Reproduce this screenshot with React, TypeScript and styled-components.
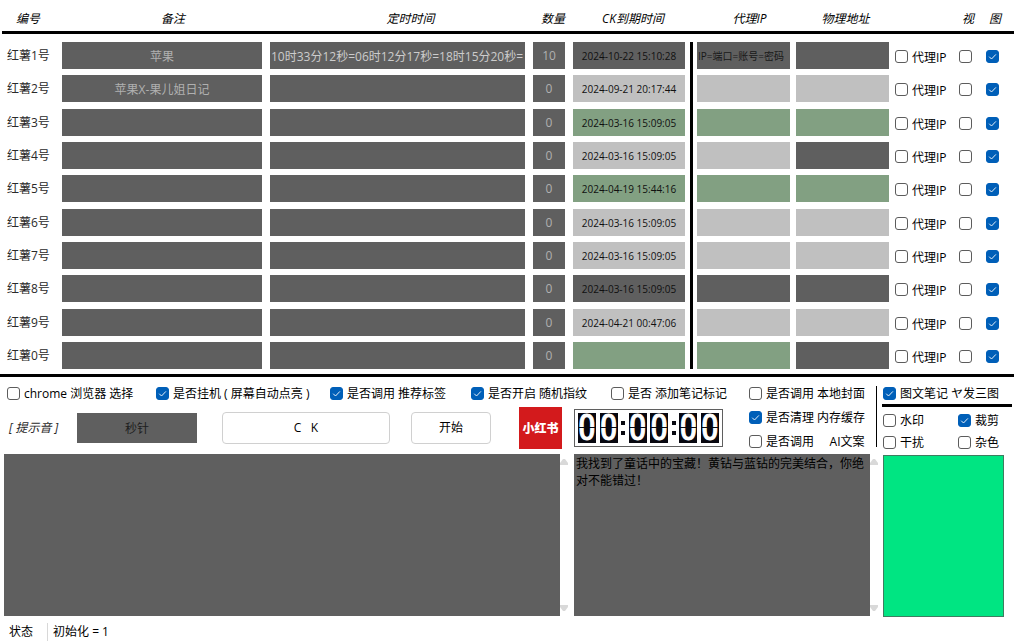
import React from "react";
import styled, { createGlobalStyle } from "styled-components";

const GREY = "#5f5f5f";
const SILVER = "#c0c0c0";
const SAGE = "#82a082";
const BLUE = "#005fb8";

const GlobalStyle = createGlobalStyle`
  *, *::before, *::after { box-sizing: border-box; }
  body {
    margin: 0;
    background: #fff;
    color: #000;
    font: 12px/14px "Open Sans", "Noto Sans CJK SC", sans-serif;
  }
  button, input, textarea { font: inherit; color: inherit; margin: 0; }
`;

const Page = styled.main`
  min-height: 100vh;
  display: flex;
  flex-direction: column;
`;

const AccountTable = styled.table`
  display: block;
  width: 100%;
  border-bottom: 3px solid #000;
`;

const Row = styled.tr`
  display: grid;
  grid-template-columns:
    62px minmax(0, 208fr) minmax(0, 263fr) 40px 120px 103px 99px 64px 27px 28px;
`;

const Head = styled.thead`
  display: block;
  height: 34px;
  margin-left: 2px;
  border-bottom: 3px solid #000;

  ${Row} {
    margin-left: -2px;
    height: 31px;
    padding-top: 12px;
  }
`;

const HeadCell = styled.th<{ $indent?: number; $left?: boolean }>`
  padding: 0 0 0 ${(p) => p.$indent ?? 0}px;
  font-weight: 400;
  font-style: italic;
  white-space: nowrap;
  text-align: ${(p) => (p.$left ? "left" : "center")};
`;

const Body = styled.tbody`
  display: block;
  padding: 8px 0 5px;

  ${Row} { height: 33px; }
  ${Row}:nth-child(3n + 2) { height: 34px; }
  ${Row}:last-child { height: 27px; }
`;

const Cell = styled.td`
  padding: 0 8px 0 0;
`;

const CountCell = styled(Cell)`
  margin-left: -1px;
  padding-left: 1px;
`;

const DateCell = styled(Cell)`
  padding-right: 5px;
  border-right: 3px solid #000;
`;

const ProxyCell = styled(Cell)`
  padding: 0 6px 0 4px;
`;

const AddressCell = styled(Cell)`
  padding-right: 6px;
`;

const CheckCell = styled(Cell)`
  height: 27px;
  padding: 2px 0 0;
  display: flex;
  align-items: center;
`;

const RowName = styled.th`
  height: 27px;
  padding: 0 0 0 7px;
  display: flex;
  align-items: center;
  font-weight: 400;
  color: #2a2a2a;
`;

const Field = styled.input<{
  $bg?: string;
  $ink?: string;
  $small?: boolean;
  $left?: boolean;
}>`
  display: block;
  width: 100%;
  height: 27px;
  padding: 0 ${(p) => (p.$left ? 1 : 0)}px;
  border: 0;
  border-radius: 0;
  outline: 0;
  background: ${(p) => p.$bg ?? GREY};
  color: ${(p) => p.$ink ?? "#b0b0b0"};
  font-size: ${(p) => (p.$small ? 10 : 12)}px;
  text-align: ${(p) => (p.$left ? "left" : "center")};
`;

const Tick = styled.input.attrs({ type: "checkbox" })`
  appearance: none;
  flex: none;
  width: 13px;
  height: 13px;
  border: 1px solid #5c5c5c;
  border-radius: 3px;
  background: #fff;

  &:checked {
    border-color: ${BLUE};
    background: ${BLUE}
      url("data:image/svg+xml,%3Csvg xmlns='http://www.w3.org/2000/svg' viewBox='0 0 13 13'%3E%3Cpath d='M3.2 6.7 5.5 9 9.9 4.4' fill='none' stroke='%23fff' stroke-width='.9'/%3E%3C/svg%3E")
      center / 13px 13px no-repeat;
  }
`;

const TickLabel = styled.label`
  display: flex;
  align-items: center;
  gap: 4px;
  height: 14px;
  white-space: pre;
`;

const TickText = styled.span`
  padding-top: 2px;
`;

const Controls = styled.section`
  display: grid;
  grid-template-columns: minmax(0, 1fr) 127px 131px;
  padding: 9px 7px 5px;
`;

const MainControls = styled.div`
  display: flex;
  flex-direction: column;
  gap: 7px;
`;

const OptionRow = styled.div`
  display: grid;
  grid-template-columns: 149fr 174fr 141fr 140fr 138fr;
`;

const ActionRow = styled.div`
  display: grid;
  grid-template-columns: 70px 145px minmax(0, 1fr) 108px 55px 175px;
  align-items: center;
  height: 42px;
`;

const ToneLabel = styled.label`
  padding-left: 2px;
  font-style: italic;
  color: #2a2a2a;
  white-space: nowrap;
`;

const ToneField = styled(Field)`
  width: 120px;
  height: 30px;
`;

const ActionButton = styled.button<{ $wide?: boolean }>`
  height: 32px;
  ${(p) => (p.$wide ? "margin-right: 21px;" : "width: 80px;")}
  padding: 0;
  border: 1px solid #d0d0d0;
  border-radius: 4px;
  background: #fff;
  white-space: pre;
`;

const Logo = styled.div`
  width: 43px;
  height: 42px;
  display: grid;
  place-items: center;
  background: #d31a1c;
  color: #fff;
  font: 900 12px/14px "Noto Sans CJK SC", sans-serif;
`;

const Clock = styled.div`
  width: 149px;
  height: 38px;
  padding: 0 3px;
  display: flex;
  align-items: center;
  justify-content: space-between;
  border: 1px solid #5f5f5f;
  background: #fff;
`;

const Digit = styled.span`
  position: relative;
  width: 18px;
  height: 30px;
  background: #080810;
  color: #fff;
  font: 400 36px/30px "Liberation Sans Narrow", "Roboto Condensed", sans-serif;
  text-align: center;
  -webkit-text-stroke: 1px #fff;

  &::after {
    content: "";
    position: absolute;
    inset: 14px 0 auto;
    height: 1px;
    background: #080810;
  }
`;

const Colon = styled.span`
  width: 4px;
  height: 14px;
  border: solid #080810;
  border-width: 4px 0;
`;

const SideOptions = styled.div`
  display: flex;
  flex-direction: column;
  gap: 10px;
`;

const ImageOptions = styled.div`
  height: 61px;
  margin-right: -5px;
  padding-left: 5px;
  border-left: 1px solid #000;
`;

const ImageHeader = styled.div`
  padding: 0 0 4px 1px;
  border-bottom: 3px solid #000;
`;

const ImageGrid = styled.div`
  display: grid;
  grid-template-columns: 75px 1fr;
  row-gap: 8px;
  padding: 6px 0 0 1px;
`;

const Editors = styled.section`
  flex: 1;
  min-height: 120px;
  display: grid;
  grid-template-columns: minmax(0, 556fr) 14px minmax(0, 296fr) 13px 121px;
  padding: 0 10px 0 4px;
`;

const TextBox = styled.textarea`
  display: block;
  width: 100%;
  height: 100%;
  padding: 1px 2px;
  border: 0;
  border-radius: 0;
  outline: 0;
  resize: none;
  overflow: hidden;
  background: ${GREY};
  color: #000;
  line-height: 17px;
`;

const ScrollTrack = styled.div`
  display: flex;
  flex-direction: column;
  justify-content: space-between;
  padding: 5px 0;
`;

const Preview = styled.div`
  margin: 1px 0 -1px;
  border: 1px solid #3e7d60;
  background: #00e582;
`;

const StatusBar = styled.footer`
  display: flex;
  align-items: center;
  height: 25px;
  padding-left: 9px;
`;

const StatusText = styled.span`
  padding: 2px 5px;
  margin: 7px 0 0 14px;
  height: 18px;
  border-left: 1px solid #d8d8d8;
`;

const StatusName = styled.span`
  padding-top: 7px;
`;

type Account = {
  id: string;
  note?: string;
  times?: string;
  count: number;
  expires: string;
  tones: [string, string, string];
  proxy?: string;
};

const accounts: Account[] = [
  {
    id: "1",
    note: "苹果",
    times: "10时33分12秒=06时12分17秒=18时15分20秒=",
    count: 10,
    expires: "2024-10-22 15:10:28",
    tones: [GREY, GREY, GREY],
    proxy: "IP=端口=账号=密码",
  },
  { id: "2", note: "苹果X-果儿姐日记", count: 0, expires: "2024-09-21 20:17:44", tones: [SILVER, SILVER, SILVER] },
  { id: "3", count: 0, expires: "2024-03-16 15:09:05", tones: [SAGE, SAGE, SAGE] },
  { id: "4", count: 0, expires: "2024-03-16 15:09:05", tones: [SILVER, SILVER, GREY] },
  { id: "5", count: 0, expires: "2024-04-19 15:44:16", tones: [SAGE, SAGE, SAGE] },
  { id: "6", count: 0, expires: "2024-03-16 15:09:05", tones: [SILVER, SILVER, SILVER] },
  { id: "7", count: 0, expires: "2024-03-16 15:09:05", tones: [SILVER, SILVER, SILVER] },
  { id: "8", count: 0, expires: "2024-03-16 15:09:05", tones: [GREY, GREY, GREY] },
  { id: "9", count: 0, expires: "2024-04-21 00:47:06", tones: [SILVER, SILVER, SILVER] },
  { id: "0", count: 0, expires: "", tones: [SAGE, SAGE, GREY] },
];

function Option({ text, on }: { text: string; on?: boolean }) {
  return (
    <TickLabel>
      <Tick defaultChecked={on} />
      <TickText>{text}</TickText>
    </TickLabel>
  );
}

function AccountRow({ a }: { a: Account }) {
  const name = `红薯${a.id}号`;
  return (
    <Row>
      <RowName scope="row">{name}</RowName>
      <Cell><Field aria-label={`${name} 备注`} defaultValue={a.note} /></Cell>
      <Cell><Field aria-label={`${name} 定时时间`} $left $ink="#cccccc" defaultValue={a.times} /></Cell>
      <CountCell><Field aria-label={`${name} 数量`} defaultValue={a.count} /></CountCell>
      <DateCell>
        <Field aria-label={`${name} CK到期时间`} $small $ink="#101010" $bg={a.tones[0]} defaultValue={a.expires} />
      </DateCell>
      <ProxyCell>
        <Field aria-label={`${name} 代理IP`} $small $left $ink="#181818" $bg={a.tones[1]} defaultValue={a.proxy} />
      </ProxyCell>
      <AddressCell>
        <Field aria-label={`${name} 物理地址`} $small $bg={a.tones[2]} />
      </AddressCell>
      <CheckCell><Option text="代理IP" /></CheckCell>
      <CheckCell><Tick aria-label={`${name} 视`} /></CheckCell>
      <CheckCell><Tick aria-label={`${name} 图`} defaultChecked /></CheckCell>
    </Row>
  );
}

function ScrollArrows() {
  return (
    <ScrollTrack>
      <svg width="8" height="6" viewBox="0 0 8 6"><path d="M3 0h2L8 4v2H0V4z" fill="#d9d9d9" /></svg>
      <svg width="8" height="6" viewBox="0 0 8 6"><path d="M0 0h8v2L5 6H3L0 2z" fill="#d9d9d9" /></svg>
    </ScrollTrack>
  );
}

export default function App() {
  return (
    <Page>
      <GlobalStyle />
      <AccountTable>
        <Head>
          <Row>
            <HeadCell $left $indent={16}>编号</HeadCell>
            <HeadCell $indent={14}>备注</HeadCell>
            <HeadCell $indent={18}>定时时间</HeadCell>
            <HeadCell>数量</HeadCell>
            <HeadCell>CK到期时间</HeadCell>
            <HeadCell $indent={10}>代理IP</HeadCell>
            <HeadCell>物理地址</HeadCell>
            <HeadCell />
            <HeadCell $left $indent={3}>视</HeadCell>
            <HeadCell $left $indent={3}>图</HeadCell>
          </Row>
        </Head>
        <Body>
          {accounts.map((a) => (
            <AccountRow key={a.id} a={a} />
          ))}
        </Body>
      </AccountTable>

      <Controls>
        <MainControls>
          <OptionRow>
            <Option text="chrome 浏览器 选择" />
            <Option text="是否挂机 ( 屏幕自动点亮 )" on />
            <Option text="是否调用 推荐标签" on />
            <Option text="是否开启 随机指纹" on />
            <Option text="是否 添加笔记标记" />
          </OptionRow>
          <ActionRow>
            <ToneLabel htmlFor="tone">[ 提示音 ]</ToneLabel>
            <ToneField id="tone" $ink="#202020" defaultValue="秒针" />
            <ActionButton type="button" $wide>{"C   K"}</ActionButton>
            <ActionButton type="button">开始</ActionButton>
            <Logo>小红书</Logo>
            <Clock>
              <Digit>0</Digit>
              <Digit>0</Digit>
              <Colon />
              <Digit>0</Digit>
              <Digit>0</Digit>
              <Colon />
              <Digit>0</Digit>
              <Digit>0</Digit>
            </Clock>
          </ActionRow>
        </MainControls>
        <SideOptions>
          <Option text="是否调用 本地封面" />
          <Option text="是否清理 内存缓存" on />
          <Option text="是否调用     AI文案" />
        </SideOptions>
        <ImageOptions>
          <ImageHeader>
            <Option text="图文笔记 ヤ发三图" on />
          </ImageHeader>
          <ImageGrid>
            <Option text="水印" />
            <Option text="裁剪" on />
            <Option text="干扰" />
            <Option text="杂色" />
          </ImageGrid>
        </ImageOptions>
      </Controls>

      <Editors>
        <TextBox aria-label="日志" />
        <ScrollArrows />
        <TextBox
          aria-label="文案"
          defaultValue="我找到了童话中的宝藏！黄钻与蓝钻的完美结合，你绝对不能错过！"
        />
        <ScrollArrows />
        <Preview />
      </Editors>

      <StatusBar>
        <StatusName>状态</StatusName>
        <StatusText>初始化 = 1</StatusText>
      </StatusBar>
    </Page>
  );
}
